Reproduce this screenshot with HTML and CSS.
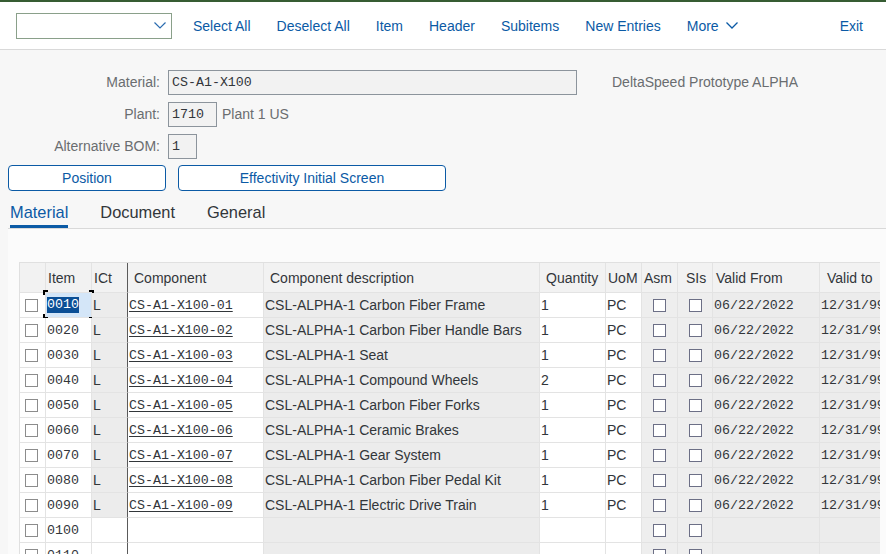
FILE: index.html
```html
<!DOCTYPE html>
<html>
<head>
<meta charset="utf-8">
<link rel="stylesheet" href="styles.css">
</head>
<body>
<div class="shellbar"></div>
<header class="toolbar">
  <div class="select">
    <svg class="chev" width="12" height="7" viewBox="0 0 12 7"><path d="M0.5 0.5 L6 6 L11.5 0.5" fill="none" stroke="#2b6cb0" stroke-width="1.2"/></svg>
  </div>
  <nav class="actions">
    <span class="tb">Select All</span>
    <span class="tb">Deselect All</span>
    <span class="tb">Item</span>
    <span class="tb">Header</span>
    <span class="tb">Subitems</span>
    <span class="tb">New Entries</span>
    <span class="tb more">More <svg width="12" height="7" viewBox="0 0 12 7"><path d="M0.5 0.5 L6 6 L11.5 0.5" fill="none" stroke="#0b5aa5" stroke-width="1.3"/></svg></span>
  </nav>
  <span class="tb exit">Exit</span>
</header>

<main class="content">
  <div class="form">
    <div class="frow">
      <span class="flabel">Material:</span>
      <span class="input w-mat">CS-A1-X100</span>
      <span class="ftext ftext-far">DeltaSpeed Prototype ALPHA</span>
    </div>
    <div class="frow">
      <span class="flabel">Plant:</span>
      <span class="input w-plant">1710</span>
      <span class="ftext">Plant 1 US</span>
    </div>
    <div class="frow">
      <span class="flabel">Alternative BOM:</span>
      <span class="input w-bom">1</span>
    </div>
  </div>

  <div class="btnrow">
    <button class="btn w-pos">Position</button>
    <button class="btn w-eff">Effectivity Initial Screen</button>
  </div>

  <div class="tabs">
    <span class="tab active">Material</span>
    <span class="tab">Document</span>
    <span class="tab">General</span>
  </div>

  <section class="panel">
    <div class="grid">
      <div class="row head">
        <div class="c c-sel"></div>
        <div class="c c-item">Item</div>
        <div class="c c-ict">ICt</div>
        <div class="c c-comp">Component</div>
        <div class="c c-desc">Component description</div>
        <div class="c c-qty">Quantity</div>
        <div class="c c-uom">UoM</div>
        <div class="c c-asm">Asm</div>
        <div class="c c-sis">SIs</div>
        <div class="c c-from">Valid From</div>
        <div class="c c-to">Valid to</div>
      </div>

      <div class="row">
        <div class="c c-sel"><span class="cb"></span></div>
        <div class="c c-item mono focus"><span class="sel">0010</span><i class="br tl"></i><i class="br tr"></i><i class="br bl"></i><i class="br brr"></i></div>
        <div class="c c-ict gray">L</div>
        <div class="c c-comp mono link">CS-A1-X100-01</div>
        <div class="c c-desc gray">CSL-ALPHA-1 Carbon Fiber Frame</div>
        <div class="c c-qty">1</div>
        <div class="c c-uom">PC</div>
        <div class="c c-asm gray2"><span class="cb cb2"></span></div>
        <div class="c c-sis gray2"><span class="cb cb2"></span></div>
        <div class="c c-from gray mono">06/22/2022</div>
        <div class="c c-to gray mono">12/31/9999</div>
      </div>

      <div class="row">
        <div class="c c-sel"><span class="cb"></span></div>
        <div class="c c-item mono">0020</div>
        <div class="c c-ict gray">L</div>
        <div class="c c-comp mono link">CS-A1-X100-02</div>
        <div class="c c-desc gray">CSL-ALPHA-1 Carbon Fiber Handle Bars</div>
        <div class="c c-qty">1</div>
        <div class="c c-uom">PC</div>
        <div class="c c-asm gray2"><span class="cb cb2"></span></div>
        <div class="c c-sis gray2"><span class="cb cb2"></span></div>
        <div class="c c-from gray mono">06/22/2022</div>
        <div class="c c-to gray mono">12/31/9999</div>
      </div>

      <div class="row">
        <div class="c c-sel"><span class="cb"></span></div>
        <div class="c c-item mono">0030</div>
        <div class="c c-ict gray">L</div>
        <div class="c c-comp mono link">CS-A1-X100-03</div>
        <div class="c c-desc gray">CSL-ALPHA-1 Seat</div>
        <div class="c c-qty">1</div>
        <div class="c c-uom">PC</div>
        <div class="c c-asm gray2"><span class="cb cb2"></span></div>
        <div class="c c-sis gray2"><span class="cb cb2"></span></div>
        <div class="c c-from gray mono">06/22/2022</div>
        <div class="c c-to gray mono">12/31/9999</div>
      </div>

      <div class="row">
        <div class="c c-sel"><span class="cb"></span></div>
        <div class="c c-item mono">0040</div>
        <div class="c c-ict gray">L</div>
        <div class="c c-comp mono link">CS-A1-X100-04</div>
        <div class="c c-desc gray">CSL-ALPHA-1 Compound Wheels</div>
        <div class="c c-qty">2</div>
        <div class="c c-uom">PC</div>
        <div class="c c-asm gray2"><span class="cb cb2"></span></div>
        <div class="c c-sis gray2"><span class="cb cb2"></span></div>
        <div class="c c-from gray mono">06/22/2022</div>
        <div class="c c-to gray mono">12/31/9999</div>
      </div>

      <div class="row">
        <div class="c c-sel"><span class="cb"></span></div>
        <div class="c c-item mono">0050</div>
        <div class="c c-ict gray">L</div>
        <div class="c c-comp mono link">CS-A1-X100-05</div>
        <div class="c c-desc gray">CSL-ALPHA-1 Carbon Fiber Forks</div>
        <div class="c c-qty">1</div>
        <div class="c c-uom">PC</div>
        <div class="c c-asm gray2"><span class="cb cb2"></span></div>
        <div class="c c-sis gray2"><span class="cb cb2"></span></div>
        <div class="c c-from gray mono">06/22/2022</div>
        <div class="c c-to gray mono">12/31/9999</div>
      </div>

      <div class="row">
        <div class="c c-sel"><span class="cb"></span></div>
        <div class="c c-item mono">0060</div>
        <div class="c c-ict gray">L</div>
        <div class="c c-comp mono link">CS-A1-X100-06</div>
        <div class="c c-desc gray">CSL-ALPHA-1 Ceramic Brakes</div>
        <div class="c c-qty">1</div>
        <div class="c c-uom">PC</div>
        <div class="c c-asm gray2"><span class="cb cb2"></span></div>
        <div class="c c-sis gray2"><span class="cb cb2"></span></div>
        <div class="c c-from gray mono">06/22/2022</div>
        <div class="c c-to gray mono">12/31/9999</div>
      </div>

      <div class="row">
        <div class="c c-sel"><span class="cb"></span></div>
        <div class="c c-item mono">0070</div>
        <div class="c c-ict gray">L</div>
        <div class="c c-comp mono link">CS-A1-X100-07</div>
        <div class="c c-desc gray">CSL-ALPHA-1 Gear System</div>
        <div class="c c-qty">1</div>
        <div class="c c-uom">PC</div>
        <div class="c c-asm gray2"><span class="cb cb2"></span></div>
        <div class="c c-sis gray2"><span class="cb cb2"></span></div>
        <div class="c c-from gray mono">06/22/2022</div>
        <div class="c c-to gray mono">12/31/9999</div>
      </div>

      <div class="row">
        <div class="c c-sel"><span class="cb"></span></div>
        <div class="c c-item mono">0080</div>
        <div class="c c-ict gray">L</div>
        <div class="c c-comp mono link">CS-A1-X100-08</div>
        <div class="c c-desc gray">CSL-ALPHA-1 Carbon Fiber Pedal Kit</div>
        <div class="c c-qty">1</div>
        <div class="c c-uom">PC</div>
        <div class="c c-asm gray2"><span class="cb cb2"></span></div>
        <div class="c c-sis gray2"><span class="cb cb2"></span></div>
        <div class="c c-from gray mono">06/22/2022</div>
        <div class="c c-to gray mono">12/31/9999</div>
      </div>

      <div class="row">
        <div class="c c-sel"><span class="cb"></span></div>
        <div class="c c-item mono">0090</div>
        <div class="c c-ict gray">L</div>
        <div class="c c-comp mono link">CS-A1-X100-09</div>
        <div class="c c-desc gray">CSL-ALPHA-1 Electric Drive Train</div>
        <div class="c c-qty">1</div>
        <div class="c c-uom">PC</div>
        <div class="c c-asm gray2"><span class="cb cb2"></span></div>
        <div class="c c-sis gray2"><span class="cb cb2"></span></div>
        <div class="c c-from gray mono">06/22/2022</div>
        <div class="c c-to gray mono">12/31/9999</div>
      </div>

      <div class="row">
        <div class="c c-sel"><span class="cb"></span></div>
        <div class="c c-item mono">0100</div>
        <div class="c c-ict"></div>
        <div class="c c-comp"></div>
        <div class="c c-desc gray"></div>
        <div class="c c-qty"></div>
        <div class="c c-uom"></div>
        <div class="c c-asm gray2"><span class="cb cb2"></span></div>
        <div class="c c-sis gray2"><span class="cb cb2"></span></div>
        <div class="c c-from gray"></div>
        <div class="c c-to gray"></div>
      </div>

      <div class="row">
        <div class="c c-sel"><span class="cb"></span></div>
        <div class="c c-item mono">0110</div>
        <div class="c c-ict"></div>
        <div class="c c-comp"></div>
        <div class="c c-desc gray"></div>
        <div class="c c-qty"></div>
        <div class="c c-uom"></div>
        <div class="c c-asm gray2"><span class="cb cb2"></span></div>
        <div class="c c-sis gray2"><span class="cb cb2"></span></div>
        <div class="c c-from gray"></div>
        <div class="c c-to gray"></div>
      </div>
    </div>
  </section>
</main>
</body>
</html>
```

FILE: styles.css
```css
* { box-sizing: border-box; }

html, body {
  margin: 0;
  padding: 0;
  height: 100%;
  overflow: hidden;
}

body {
  background: #f7f7f7;
  font-family: "Liberation Sans", Arial, sans-serif;
  font-size: 14px;
  color: #32363a;
}

.shellbar {
  height: 2px;
  background: #365c33;
}

.toolbar {
  height: 48px;
  background: #ffffff;
  border-bottom: 1px solid #d9d9d9;
  display: flex;
  align-items: center;
  padding: 0 23px 0 16px;
}

.select {
  width: 156px;
  height: 26px;
  border: 1px solid #8aa08a;
  background: #fff;
  display: flex;
  align-items: center;
  justify-content: flex-end;
  padding-right: 5px;
}

.actions {
  display: flex;
  align-items: center;
  gap: 26px;
  margin-left: 21px;
}

.tb {
  color: #0b5aa5;
  font-size: 14px;
  line-height: 20px;
  white-space: nowrap;
}

.more {
  display: flex;
  align-items: center;
  gap: 7px;
}

.exit {
  margin-left: auto;
}

.content {
  padding: 20px 0 0 0;
}

.form {
  display: flex;
  flex-direction: column;
  gap: 8px;
}

.frow {
  display: flex;
  align-items: center;
  height: 24px;
}

.flabel {
  width: 168px;
  padding-right: 8px;
  text-align: right;
  color: #6a6d70;
  white-space: nowrap;
}

.input {
  height: 25px;
  border: 1px solid #8c949c;
  background: #f2f2f2;
  font-family: "Liberation Mono", "Courier New", monospace;
  font-size: 13.3px;
  color: #32363a;
  padding-left: 3px;
  display: flex;
  align-items: center;
}

.w-mat { width: 409px; }
.w-plant { width: 49px; }
.w-bom { width: 29px; }

.ftext {
  color: #6a6d70;
  margin-left: 5px;
}

.ftext-far {
  margin-left: 35px;
}

.btnrow {
  display: flex;
  gap: 12px;
  padding-left: 8px;
  margin-top: 7px;
}

.btn {
  height: 26px;
  background: #fff;
  border: 1px solid #0b5aa5;
  border-radius: 4px;
  color: #0b5aa5;
  font-family: "Liberation Sans", Arial, sans-serif;
  font-size: 14px;
  padding: 0;
}

.w-pos { width: 158px; }
.w-eff { width: 268px; }

.tabs {
  display: flex;
  gap: 32px;
  margin: 1px 0 0 8px;
  padding-left: 2px;
  border-bottom: 1px solid #d9d9d9;
}

.tab {
  height: 36px;
  padding-top: 10px;
  font-size: 16.4px;
  line-height: 20px;
  color: #32363a;
  border-bottom: 3px solid transparent;
}

.tab.active {
  color: #0b5aa5;
  border-bottom-color: #0b5aa5;
}

.panel {
  margin-left: 8px;
  background: #fbfbfb;
  padding: 33px 0 0 11px;
  height: 400px;
}

.grid {
  width: 861px;
  overflow: hidden;
  border-left: 1px solid #e0e0e0;
  border-top: 1px solid #e0e0e0;
}

.row {
  display: grid;
  grid-template-columns: 26px 46px 36px 136px 276px 66px 36px 36px 35px 107px 61px;
  width: 862px;
  height: 25px;
}

.row.head {
  height: 30px;
  background: #f2f2f2;
}

.c {
  border-right: 1px solid #e3e3e3;
  border-bottom: 1px solid #e3e3e3;
  display: flex;
  align-items: center;
  padding-left: 1px;
  white-space: nowrap;
  overflow: hidden;
  background: #ffffff;
  position: relative;
}

.c-sel { padding-left: 5px; }
.c-asm, .c-sis { justify-content: center; padding-left: 0; }

.head .c {
  background: #f2f2f2;
  color: #32363a;
  justify-content: flex-start;
}

.c-ict { border-right-color: #5a5a5a; }
.head .c-ict { border-right-color: #5a5a5a; }

.head .c-item { padding-left: 2px; }
.head .c-ict { padding-left: 2px; }
.head .c-comp { padding-left: 6px; }
.head .c-desc { padding-left: 6px; }
.head .c-qty { padding-left: 6px; }
.head .c-uom { padding-left: 2px; }
.head .c-asm { padding-left: 2px; }
.head .c-sis { padding-left: 8px; }
.head .c-from { padding-left: 3px; }
.head .c-to { padding-left: 7px; }

.gray { background: #ececec; }
.gray2 { background: #eeeeee; }

.mono {
  font-family: "Liberation Mono", "Courier New", monospace;
  font-size: 13.3px;
}

.link {
  text-decoration: underline;
  text-underline-offset: 2px;
}

.cb {
  width: 13px;
  height: 13px;
  border: 1px solid #8c8c8c;
  background: #fff;
  display: block;
}

.cb2 {
  border-color: #6c6f86;
}

.focus {
  background: #d4e6f8;
  overflow: visible;
}

.sel {
  background: #0b4f96;
  color: #fff;
  line-height: 16px;
}

.br {
  position: absolute;
  width: 5px;
  height: 5px;
  border-color: #000;
  border-style: solid;
  border-width: 0;
}

.br.tl { top: -3px; left: -3px; border-top-width: 2px; border-left-width: 2px; }
.br.tr { top: -3px; right: -3px; border-top-width: 2px; border-right-width: 2px; }
.br.bl { bottom: -2px; left: -3px; border-bottom-width: 2px; border-left-width: 2px; }
.br.brr { bottom: -2px; right: -3px; border-bottom-width: 2px; border-right-width: 2px; }
```
